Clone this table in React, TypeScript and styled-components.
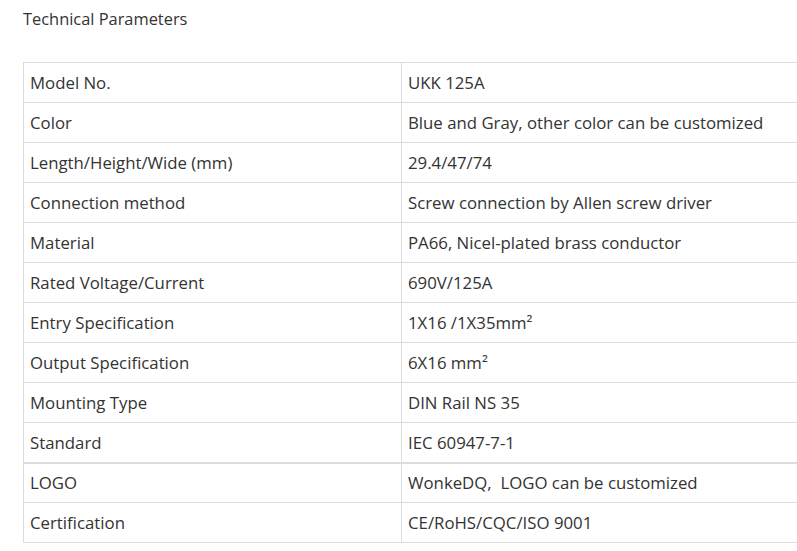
import React from "react";
import styled, { createGlobalStyle } from "styled-components";

const Global = createGlobalStyle`
  html, body { margin: 0; padding: 0; background: #fff; overflow: hidden; }
  body { font-family: "Open Sans", "Noto Sans", sans-serif; color: #333; }
`;

const Page = styled.div`
  padding: 8px 0 0 23px;
  width: 774px;
`;

const Title = styled.h3`
  margin: 0;
  font-size: 16.4px;
  font-weight: 400;
  line-height: 22px;
  color: #333;
`;

const Table = styled.table`
  margin-top: 32px;
  border-collapse: collapse;
  width: 774px;
  table-layout: fixed;
`;

const Row = styled.tr<{ $thick?: boolean }>`
  height: 40px;
  border-top: ${(p) => (p.$thick ? "2px" : "1px")} solid #dcdcdc;
`;

const KeyCell = styled.td`
  width: 365px;
  border: 1px solid #dcdcdc;
  padding: 0 6px;
  font-size: 16.8px;
  color: #333;
  vertical-align: middle;
  white-space: nowrap;
`;

const ValueCell = styled(KeyCell)`
  width: auto;
  border-right: none;
  white-space: pre;
`;

const rows: [string, string][] = [
  ["Model No.", "UKK 125A"],
  ["Color", "Blue and Gray, other color can be customized"],
  ["Length/Height/Wide (mm)", "29.4/47/74"],
  ["Connection method", "Screw connection by Allen screw driver"],
  ["Material", "PA66, Nicel-plated brass conductor"],
  ["Rated Voltage/Current", "690V/125A"],
  ["Entry Specification", "1X16 /1X35mm²"],
  ["Output Specification", "6X16 mm²"],
  ["Mounting Type", "DIN Rail NS 35"],
  ["Standard", "IEC 60947-7-1"],
  ["LOGO", "WonkeDQ,  LOGO can be customized"],
  ["Certification", "CE/RoHS/CQC/ISO 9001"],
];

export default function App() {
  return (
    <Page>
      <Global />
      <Title>Technical Parameters</Title>
      <Table>
        <tbody>
          {rows.map(([k, v]) => (
            <Row key={k} $thick={k === "LOGO"}>
              <KeyCell>{k}</KeyCell>
              <ValueCell>{v}</ValueCell>
            </Row>
          ))}
        </tbody>
      </Table>
    </Page>
  );
}
